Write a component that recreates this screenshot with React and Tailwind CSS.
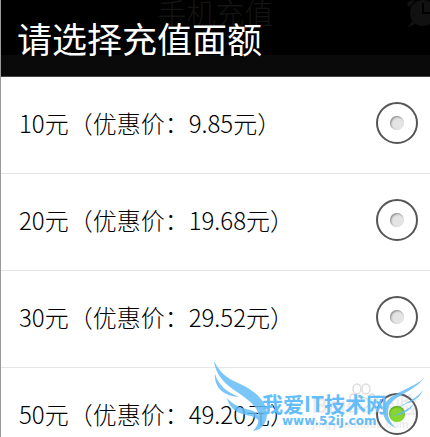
const OPTIONS = [
  { value: "10", price: "9.85" },
  { value: "20", price: "19.68" },
  { value: "30", price: "29.52" },
  { value: "50", price: "49.20" },
];

function AlarmIcon() {
  return (
    <svg viewBox="0 0 32 32" className="size-8" fill="#111111" aria-hidden="true">
      <circle cx="17" cy="13" r="13" />
      <path d="M1 3 L6 0 L9 1 L3 7 Z" />
      <path d="M7 20 L2 27 L9 24 Z" />
      <path d="M17 3 V13 H24" fill="none" stroke="#000000" strokeWidth="2" />
    </svg>
  );
}

// The dimmed screen title behind the dialog shows through its header
function Header() {
  return (
    <header className="relative shrink-0 border-b border-[#444444] bg-black">
      <div aria-hidden="true" className="absolute inset-x-0 top-0 flex justify-center text-[29px] leading-6 font-light text-[#141414]">
        <span>手机充值</span>
        <span className="absolute top-0 -right-2">
          <AlarmIcon />
        </span>
      </div>
      <h1 className="relative px-4 pt-5 text-[35px] leading-[35px] font-normal">请选择充值面额</h1>
      <div className="h-[21px] bg-[#0a0a0a]" />
    </header>
  );
}

function OptionRow({ value, price, checked }) {
  return (
    <label className="flex h-[97px] shrink-0 items-center justify-between border-b border-[#e6e6e6] pr-3 pb-1 pl-[18px] text-black">
      <span className="text-2xl font-light whitespace-nowrap">
        {value}元（优惠价：{price}元）
      </span>
      <span className="grid size-[42px] shrink-0 place-items-center rounded-full border-2 border-[#555555]">
        <input
          type="radio"
          name="amount"
          value={value}
          defaultChecked={checked}
          className="size-[14px] appearance-none rounded-full bg-[#e4e4e4] shadow-[inset_1px_1px_2px_#888888] checked:size-4 checked:bg-[#86d92c] checked:shadow-[inset_0_1px_2px_#4f9a10]"
        />
      </span>
    </label>
  );
}

function Watermark() {
  return (
    <div aria-hidden="true" className="pointer-events-none absolute right-0 bottom-0 h-[81px] w-[222px]">
      <div className="absolute top-[38px] left-[104px] font-['Liberation_Sans','Noto_Sans_CJK_SC',sans-serif] text-[22px] leading-6 font-bold whitespace-nowrap text-[#999999]/20">
        Baidu经验
        <div className="text-[11px] leading-3">jingyan.baidu.com</div>
      </div>
      <svg viewBox="0 0 222 81" className="absolute inset-0 size-full">
        <g fill="#ffffff" stroke="#dddddd" strokeWidth="1.5">
          <ellipse cx="153" cy="47" rx="8" ry="6" />
          <ellipse cx="145" cy="42" rx="3" ry="4" />
          <ellipse cx="149" cy="33" rx="4" ry="5" />
          <ellipse cx="158" cy="33" rx="4" ry="5" />
          <ellipse cx="164" cy="42" rx="3" ry="4" />
        </g>
        <g fill="#63bdf8" opacity="0.85">
          <path d="M6 5 C12 17 19 22 30 27 C46 34 58 44 59 57 C59 67 54 74 45 75 C51 69 52 62 49 54 C44 45 33 39 22 31 C13 24 7 15 6 5 Z" />
          <path d="M7 18 C11 30 19 36 31 41 C16 40 6 32 7 18 Z" />
          <path d="M19 42 C26 50 34 52 42 54 C49 56 53 60 52 67 C49 61 44 60 38 59 C28 57 21 51 19 42 Z" />
          <path d="M216 22 C207 35 187 39 181 50 C178 58 181 66 188 72 C178 68 173 59 176 50 C182 36 205 33 216 22 Z" />
          <path d="M215 34 C210 47 197 46 187 54 C195 47 208 44 215 34 Z" />
          <path d="M206 47 C203 56 193 58 184 61 C192 56 201 54 206 47 Z" />
        </g>
      </svg>
      <div className="absolute inset-x-0 top-[35px] pl-[54px] text-[21px] leading-6 font-bold whitespace-nowrap text-[#63bdf8]">
        我爱IT技术网
        <div className="pl-5 font-['DejaVu_Sans',sans-serif] text-xs leading-3 font-bold">www.52ij.com</div>
      </div>
    </div>
  );
}

export default function App() {
  return (
    <main className="relative flex h-screen flex-col overflow-hidden border-l border-[#999999] bg-white font-['Noto_Sans_CJK_SC',sans-serif] text-white">
      <Header />
      <div className="flex min-h-0 flex-1 flex-col overflow-y-auto [scrollbar-width:none]">
        {OPTIONS.map((option) => (
          <OptionRow key={option.value} {...option} checked={option.value === "50"} />
        ))}
      </div>
      <Watermark />
    </main>
  );
}
